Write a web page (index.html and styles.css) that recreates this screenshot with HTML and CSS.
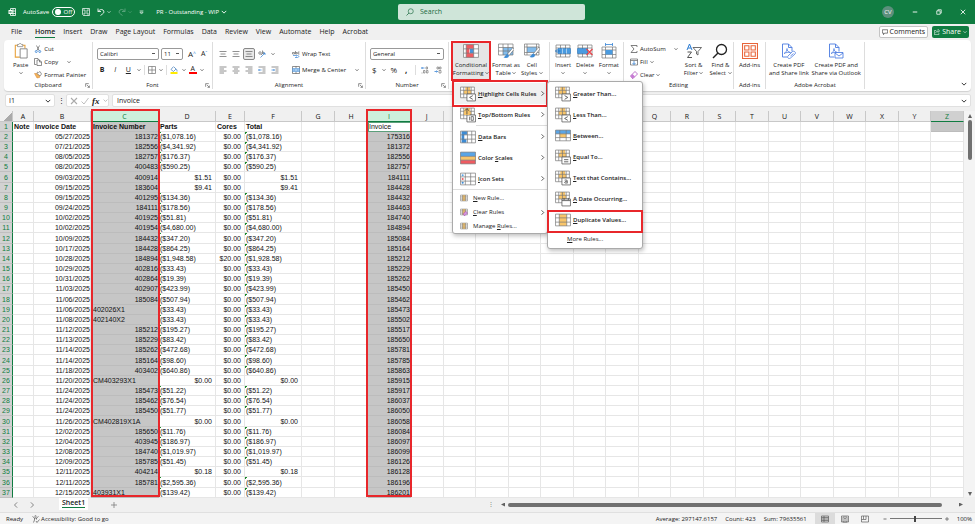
FILE: index.html
```html
<!DOCTYPE html>
<html lang="en">

<head>
    <meta charset="UTF-8">
    <meta name="viewport" content="width=device-width, initial-scale=1.0">
    <title>PR - Outstanding - WIP</title>
    <link rel="stylesheet" href="styles.css">
</head>

<body>
    <!-- icon sprite -->
    <svg class="sprite">
        <symbol id="chev" viewBox="0 0 8 8"><path d="M1 2.5l3 3 3-3" fill="none" stroke="currentColor" stroke-width="1.2"/></symbol>
        <symbol id="chev-right" viewBox="0 0 8 8"><path d="M2.5 .5L6 4 2.5 7.500" fill="none" stroke="currentColor" stroke-width="1.2"/></symbol>
        <symbol id="chev-left" viewBox="0 0 8 8"><path d="M5.500 .5L2 4l3.500 3.500" fill="none" stroke="currentColor" stroke-width="1.2"/></symbol>
        <symbol id="excel" viewBox="0 0 16 16"><path d="M5 1h10v14H5V1zM5 6h10M10 1v14M5 11h10" fill="none" stroke="#fff" stroke-width="1.6"/><path d="M1 4h8v8H1z" fill="#fff"/><path d="M3 6l4 4M7 6l-4 4" stroke="#107c41" stroke-width="1.5"/></symbol>
        <symbol id="save" viewBox="0 0 16 16"><path d="M1 1h14v14H3l-2-2zM4 1v5h8V1M4 15v-5h8v5" fill="none" stroke="#fff" stroke-width="1.4"/></symbol>
        <symbol id="undo" viewBox="0 0 16 16"><path d="M2 1v6h6M2 7c3-4 7-5 10-3 3 3 2 6-1 8l-4 3" fill="none" stroke="currentColor" stroke-width="1.7"/></symbol>
        <symbol id="redo" viewBox="0 0 16 16"><path d="M14 1v6H8M14 7C11 3 7 2 4 4c-3 3-2 6 1 8l4 3" fill="none" stroke="currentColor" stroke-width="1.7"/></symbol>
        <symbol id="more" viewBox="0 0 8 8"><path d="M1 1.500h6" stroke="currentColor"/><path d="M1.500 3.500h5L4 6.500z" fill="none" stroke="currentColor"/></symbol>
        <symbol id="search" viewBox="0 0 16 16"><circle cx="9.500" cy="6.500" r="5" fill="none" stroke="currentColor" stroke-width="1.300"/><path d="M6 10l-5 5" stroke="currentColor" stroke-width="1.500"/></symbol>
        <symbol id="minus" viewBox="0 0 8 8"><path d="M1 4h6" stroke="currentColor" stroke-width="1.2"/></symbol>
        <symbol id="plus" viewBox="0 0 8 8"><path d="M0 4h8M4 0v8" stroke="currentColor"/></symbol>
        <symbol id="restore" viewBox="0 0 8 8"><path d="M1 2.500h4.500V7H1zM2.500 2.500V1H7v4.500H5.500" fill="none" stroke="currentColor"/></symbol>
        <symbol id="close" viewBox="0 0 8 8"><path d="M1 1l6 6M7 1L1 7" stroke="currentColor" stroke-width="1.100"/></symbol>
        <symbol id="comment" viewBox="0 0 16 16"><path d="M1 2h14v9H7l-3 4v-4H1z" fill="none" stroke="currentColor" stroke-width="1.500"/></symbol>
        <symbol id="share" viewBox="0 0 16 16"><path d="M6 4H1v11h12v-4M4 11c1-4 4-5 7-5V9l4-4-4-4v3" fill="none" stroke="currentColor" stroke-width="1.500"/></symbol>
        <symbol id="paste" viewBox="0 0 32 36"><path d="M13 32H3V5h22v7" fill="#fff" stroke="#e8a33d" stroke-width="2.500"/><path d="M8 3h3c1-3 5-3 6 0h3v5H8z" fill="#fff" stroke="#777" stroke-width="1.500"/><path d="M14 13h16v21H14z" fill="#fff" stroke="#666" stroke-width="1.700"/></symbol>
        <symbol id="cut" viewBox="0 0 16 16"><path d="M5 1l5 10M11 1L6 11" stroke="#555" stroke-width="1.300"/><circle cx="4.500" cy="13" r="2" fill="none" stroke="#2b7cd3" stroke-width="1.500"/><circle cx="11.500" cy="13" r="2" fill="none" stroke="#2b7cd3" stroke-width="1.500"/></symbol>
        <symbol id="copy" viewBox="0 0 16 16"><path d="M5 13H1V1h7l2 3" fill="none" stroke="#555" stroke-width="1.300"/><path d="M6 4h5l4 4v7H6zM11 4v4h4" fill="#fff" stroke="#555" stroke-width="1.300"/></symbol>
        <symbol id="painter" viewBox="0 0 16 16"><path d="M1 5l5 9 5-1 1-4-5-4z" fill="#f2b35b" stroke="#d9822b"/><path d="M6 5l6 5 3-4-3-5-3 2-2-1z" fill="#fff" stroke="#666" stroke-width="1.300"/></symbol>
        <symbol id="borders" viewBox="0 0 16 16"><path d="M1 1h14v14H1zM1 8h14M8 1v14" fill="none" stroke="#666" stroke-width="1.300"/></symbol>
        <symbol id="bucket" viewBox="0 0 16 16"><path d="M7 1L2 7l5 4 5-5-4-4M12 6c2 1 2 3 2 5" fill="none" stroke="#2b6cb0" stroke-width="1.300"/><path d="M1 12h14v4H1z" fill="#ffeb00"/></symbol>
        <symbol id="al-h" viewBox="0 0 16 16"><path d="M1 2h14M4 6h8M1 10h14M4 14h8" stroke="#555" stroke-width="1.300"/></symbol>
        <symbol id="al-l" viewBox="0 0 16 16"><path d="M1 2h14M1 6h9M1 10h14M1 14h9" stroke="#555" stroke-width="1.300"/></symbol>
        <symbol id="al-r" viewBox="0 0 16 16"><path d="M1 2h14M6 6h9M1 10h14M6 14h9" stroke="#555" stroke-width="1.300"/></symbol>
        <symbol id="al-3" viewBox="0 0 16 16"><path d="M1 3h14M3 8h10M1 13h14" stroke="#555" stroke-width="1.300"/></symbol>
        <symbol id="indent-l" viewBox="0 0 16 16"><path d="M1 2h14M9 6h6M9 10h6M1 14h14" stroke="#555" stroke-width="1.300"/><path d="M7 8H1l2-2M1 8l2 2" fill="none" stroke="#2b7cd3" stroke-width="1.400"/></symbol>
        <symbol id="indent-r" viewBox="0 0 16 16"><path d="M1 2h14M9 6h6M9 10h6M1 14h14" stroke="#555" stroke-width="1.300"/><path d="M1 8h6L5 6M7 8l-2 2" fill="none" stroke="#2b7cd3" stroke-width="1.400"/></symbol>
        <symbol id="orient" viewBox="0 0 16 16"><circle cx="4" cy="6" r="2.500" fill="none" stroke="#555" stroke-width="1.300"/><path d="M6 10l3-3M9 1v6c3 1 4-3 1-3" fill="none" stroke="#555" stroke-width="1.300"/><path d="M5 15L14 6M10 6h4v4" fill="none" stroke="#2b7cd3" stroke-width="1.400"/></symbol>
        <symbol id="wrap" viewBox="0 0 16 16"><path d="M1 5h4v3H1zM7 2v6h3V5H7M15 4h-3v4h3" fill="none" stroke="#555" stroke-width="1.200"/><path d="M2 11h9c4 0 3 4 0 4H7l2-2M7 15l2 1" fill="none" stroke="#2b7cd3" stroke-width="1.300"/></symbol>
        <symbol id="merge" viewBox="0 0 16 16"><path d="M1 1h14v14H1zM8 1v4M8 11v4" fill="none" stroke="#555" stroke-width="1.300"/><path d="M1 5h14v6H1z" fill="#cfe6f8" stroke="#2b7cd3"/><path d="M3 8h10M5 6L3 8l2 2M11 6l2 2-2 2" fill="none" stroke="#2b7cd3"/></symbol>
        <symbol id="decimal" viewBox="0 0 16 16"><path d="M7 4H1l2-2M1 4l2 2" fill="none" stroke="#2b7cd3" stroke-width="1.500"/><path d="M10 2h3v4h-3zM5 9h3v5H5zM11 9h3v5h-3zM2 13v2" fill="none" stroke="#666" stroke-width="1.200"/></symbol>
        <symbol id="decimal-r" viewBox="0 0 16 16"><path d="M1 11h6L5 9M7 11l-2 2" fill="none" stroke="#2b7cd3" stroke-width="1.500"/><path d="M6 2h3v4H6zM11 2h3v4h-3zM10 9h4v5h-4z" fill="none" stroke="#666" stroke-width="1.200"/></symbol>
        <symbol id="cf" viewBox="0 0 30 26"><path d="M1 1h28v24H1z" fill="#fff"/><path d="M6 1h14v8H6zM6 9h6v8H6zM6 17h14v8H6z" fill="#ef5b61"/><path d="M13 9h7v8h-7z" fill="#4a94dc"/><path d="M1 1h28v24H1zM1 9h28M1 17h28M6 1v24M20 1v24" fill="none" stroke="#777" stroke-width="1.300"/></symbol>
        <symbol id="ftable" viewBox="0 0 32 32"><path d="M1 2h29v22H1z" fill="#fff"/><path d="M10 9h20v15H10z" fill="#82bcec"/><path d="M1 2h29v22H1zM1 9h29M1 16h29M10 2v22M20 2v22" fill="none" stroke="#777" stroke-width="1.400"/><path d="M30 9L19 22l3 3L32 13z" fill="#fff" stroke="#555"/><path d="M19 22c-4 1-4 5-8 7 5 2 11 1 11-4z" fill="#3d8bd4"/></symbol>
        <symbol id="cstyle" viewBox="0 0 32 32"><path d="M1 2h29v22H1z" fill="#fff"/><path d="M6 8h19v11H6z" fill="#82bcec"/><path d="M1 2h29v22H1zM1 8h29M1 19h29M6 2v22M25 2v22" fill="none" stroke="#777" stroke-width="1.400"/><path d="M30 8L19 21l3 3L32 12z" fill="#fff" stroke="#555"/><path d="M19 21c-4 1-4 5-8 7 5 2 11 1 11-4z" fill="#3d8bd4"/></symbol>
        <symbol id="insert" viewBox="0 0 32 28"><path d="M2 2h28v24H2zM2 8h28M2 20h28M11 2v24M21 2v24" fill="#fff" stroke="#777" stroke-width="1.400"/><path d="M6 9h25v10H6z" fill="#4a9be0" stroke="#1f6fb8"/><path d="M15 9v10M23 9v10" stroke="#fff"/><path d="M11 14H1M5 10l-4 4 4 4" fill="none" stroke="#1f6fb8" stroke-width="1.600"/></symbol>
        <symbol id="delete" viewBox="0 0 32 28"><path d="M2 2h28v24H2zM2 8h28M2 20h28M11 2v24M21 2v24" fill="#fff" stroke="#777" stroke-width="1.400"/><path d="M1 9h20v10H1z" fill="#4a9be0" stroke="#1f6fb8"/><path d="M19 10l12 12M31 10L19 22" stroke="#e8434a" stroke-width="2.400"/></symbol>
        <symbol id="format" viewBox="0 0 32 32"><path d="M2 8h28v22H2zM2 14h28M2 23h28M9 8v22M23 8v22" fill="#fff" stroke="#777" stroke-width="1.400"/><path d="M9 14h14v9H9z" fill="#4a9be0"/><path d="M9 3h14M9 0v6M23 0v6" stroke="#2b7cd3" stroke-width="1.500"/></symbol>
        <symbol id="sum" viewBox="0 0 16 16"><path d="M14 4V1H2l6 7-6 7h12v-3" fill="none" stroke="#555" stroke-width="1.500"/></symbol>
        <symbol id="fill" viewBox="0 0 16 16"><path d="M1 2h14v12H1zM1 5h14" fill="none" stroke="#555" stroke-width="1.300"/><path d="M8 6v7M5 10l3 3 3-3" fill="none" stroke="#2b7cd3" stroke-width="1.500"/></symbol>
        <symbol id="eraser" viewBox="0 0 16 16"><path d="M1 10l9-9 5 5-9 9H5z" fill="#fff" stroke="#a33bb5" stroke-width="1.400"/><path d="M1 10l4-4 5 5-4 4H5z" fill="#c77bd4"/></symbol>
        <symbol id="sort" viewBox="0 0 32 30"><path d="M2 13L7 1l5 12M4 9h6" fill="none" stroke="#2b7cd3" stroke-width="2"/><path d="M3 17h8L3 28h9" fill="none" stroke="#555" stroke-width="2"/><path d="M14 8h17l-7 8v7l-3-2v-5z" fill="#fff" stroke="#555" stroke-width="1.700"/></symbol>
        <symbol id="addins" viewBox="0 0 30 30"><path d="M1 1h28v28H1z" fill="#fff" stroke="#e8653a" stroke-width="2"/><path d="M5 5h8v8H5zM17 5h8v8h-8zM5 17h8v8H5zM17 17h8v8h-8z" fill="none" stroke="#e8653a" stroke-width="2"/></symbol>
        <symbol id="pdf" viewBox="0 0 30 32"><path d="M11 28H2V2h12l7 7v8M14 2v7h7" fill="none" stroke="#4a7be0" stroke-width="1.800"/><path d="M5 21c4-2 6-6 6-10 0 4 2 7 7 8-5-1-9 0-13 2z" fill="none" stroke="#4a7be0" stroke-width="1.500"/></symbol>
        <symbol id="pdf-link" viewBox="0 0 30 32"><use href="#pdf"/><path d="M13 26l9-9c3-2 8 2 5 5l-9 8c-3 3-8-1-5-4zM18 26l6-5" fill="#fff" stroke="#4a7be0" stroke-width="1.600"/></symbol>
        <symbol id="pdf-mail" viewBox="0 0 30 32"><use href="#pdf"/><path d="M13 19h16v11H13zM13 20l8 6 8-6" fill="#fff" stroke="#4a7be0" stroke-width="1.700"/></symbol>
        <symbol id="launch" viewBox="0 0 8 8"><path d="M1 6V1h5M3 3l4 4M7 4v3H4" fill="none" stroke="#555"/></symbol>
        <symbol id="check" viewBox="0 0 16 16"><path d="M1 9l5 5L15 2" fill="none" stroke="currentColor" stroke-width="1.500"/></symbol>
        <!-- menu icons -->
        <symbol id="m-base" viewBox="0 0 30 30"><path d="M1 2h26v20H1z" fill="#fff"/><path d="M7 8h14v7H7zM10 2h9v6h-9z" fill="#f8c56a"/><path d="M1 2h26v20H1zM1 8h26M1 15h26M7 2v20M14 2v20M21 2v20" fill="none" stroke="#777" stroke-width="1.300"/></symbol>
        <symbol id="m-badge" viewBox="0 0 30 30"><use href="#m-base"/><path d="M13 15h16v13H13z" fill="#fff" stroke="#555" stroke-width="1.400"/></symbol>
        <symbol id="m-gt" viewBox="0 0 30 30"><use href="#m-badge"/><path d="M18 18l6 3.500-6 3.500" fill="none" stroke="#444" stroke-width="1.500"/></symbol>
        <symbol id="m-lt" viewBox="0 0 30 30"><use href="#m-badge"/><path d="M24 18l-6 3.500 6 3.500" fill="none" stroke="#444" stroke-width="1.500"/></symbol>
        <symbol id="m-eq" viewBox="0 0 30 30"><use href="#m-badge"/><path d="M17 20h8M17 24h8" stroke="#444" stroke-width="1.500"/></symbol>
        <symbol id="m-txt" viewBox="0 0 30 30"><use href="#m-badge"/><path d="M18 19c6-1 5 1 5 6M23 21c-7 0-6 5 0 3" fill="none" stroke="#444" stroke-width="1.500"/></symbol>
        <symbol id="m-date" viewBox="0 0 30 30"><use href="#m-badge"/><path d="M13 18h16M17 13v4M25 13v4" stroke="#555" stroke-width="1.600"/></symbol>
        <symbol id="m-top" viewBox="0 0 30 30"><use href="#m-badge"/><path d="M8 3h10v12H8z" fill="#f8c56a"/><path d="M13 14V3M9 7l4-4 4 4" fill="none" stroke="#444" stroke-width="1.500"/><path d="M18 18v7M21 18h4v7h-4z" fill="none" stroke="#444" stroke-width="1.300"/></symbol>
        <symbol id="m-between" viewBox="0 0 30 30"><path d="M1 4h28v20H1z" fill="#fff"/><path d="M1 4h28v7H1z" fill="#5aa5e6"/><path d="M9 11h12v7H9z" fill="#f8c56a"/><path d="M1 4h28v20H1zM1 11h28M1 18h28M9 4v20M21 4v20" fill="none" stroke="#777" stroke-width="1.300"/></symbol>
        <symbol id="m-dup" viewBox="0 0 30 30"><path d="M1 4h28v22H1z" fill="#fff"/><path d="M8 4h14v22H8z" fill="#f8c56a"/><path d="M1 4h28v22H1zM1 11h28M1 19h28M8 4v22M22 4v22" fill="none" stroke="#777" stroke-width="1.300"/></symbol>
        <symbol id="m-bars" viewBox="0 0 30 30"><path d="M1 4h28v22H1z" fill="#fff"/><path d="M3 4h10v7H3zM3 11h5v8H3zM3 19h9v7H3z" fill="#3d8bd4"/><path d="M1 4h28v22H1zM1 11h28M1 19h28M14 4v22M22 4v22" fill="none" stroke="#777" stroke-width="1.300"/></symbol>
        <symbol id="m-scales" viewBox="0 0 30 30"><path d="M1 4h28v8H1z" fill="#5aa5e6"/><path d="M1 12h28v7H1z" fill="#f8c56a"/><path d="M1 19h28v7H1z" fill="#ef5b61"/><path d="M1 4h28v22H1zM1 12h28M1 19h28" fill="none" stroke="#777" stroke-width="1.300"/></symbol>
        <symbol id="m-icons" viewBox="0 0 30 30"><path d="M1 4h28v22H1zM1 11h28M1 19h28M10 4v22M20 4v22" fill="#fff" stroke="#777" stroke-width="1.300"/><circle cx="5" cy="8" r="2" fill="#5aa5e6"/><circle cx="5" cy="15" r="2" fill="#ef5b61"/><circle cx="5" cy="22" r="2" fill="#3d8bd4"/></symbol>
        <symbol id="m-new" viewBox="0 0 30 30"><path d="M2 4h26v22H2z" fill="#fff"/><path d="M9 4h12v22H9z" fill="#f8c56a"/><path d="M2 4h26v22H2zM2 11h26M2 19h26M9 4v22M21 4v22" fill="none" stroke="#777" stroke-width="2"/></symbol>
        <symbol id="m-clear" viewBox="0 0 30 30"><use href="#m-new"/><path d="M13 22l9-9 6 6-9 9h-4z" fill="#d79be0" stroke="#a33bb5" stroke-width="2"/></symbol>
        <symbol id="access" viewBox="0 0 16 16"><circle cx="7" cy="2.500" r="1.500" fill="none" stroke="#555"/><path d="M1 3l4 3v4l-2 5M13 3L9 6v3M5 6h4M8 12l2 3 5-6" fill="none" stroke="#555" stroke-width="1.400"/></symbol>
        <symbol id="v-normal" viewBox="0 0 16 14"><path d="M1 1h14v12H1zM1 4h14M1 7h14M1 10h14M6 1v12" fill="none" stroke="#555" stroke-width="1.300"/></symbol>
        <symbol id="v-page" viewBox="0 0 16 14"><path d="M1 1h14v12H1zM4 3h8v10H4zM6 6h4M6 9h4" fill="none" stroke="#555" stroke-width="1.300"/></symbol>
        <symbol id="v-break" viewBox="0 0 16 14"><path d="M1 1h14v12H1zM5 1v7h5V1M1 8h4" fill="none" stroke="#555" stroke-width="1.300"/></symbol>
    </svg>

    <header class="titlebar">
        <div class="title-left">
            <svg class="ic8"><use href="#excel"/></svg>
            <label class="autosave">AutoSave <span class="switch"><input type="checkbox">Off</span></label>
            <button aria-label="Save"><svg class="ic8"><use href="#save"/></svg></button>
            <button aria-label="Undo"><svg class="ic8"><use href="#undo"/></svg><svg class="ic4"><use href="#chev"/></svg></button>
            <button class="dim" aria-label="Redo"><svg class="ic8"><use href="#redo"/></svg><svg class="ic4"><use href="#chev"/></svg></button>
            <button class="qat-more" aria-label="Customize"><svg class="ic5"><use href="#more"/></svg></button>
            <button class="doc-name">PR - Outstanding - WIP <svg class="ic6"><use href="#chev"/></svg></button>
        </div>
        <div class="search">
            <svg class="ic8"><use href="#search"/></svg>
            <input type="text" placeholder="Search" aria-label="Search">
        </div>
        <div class="title-right">
            <span class="avatar">CV</span>
            <button aria-label="Minimize"><svg class="ic6"><use href="#minus"/></svg></button>
            <button aria-label="Restore"><svg class="ic6"><use href="#restore"/></svg></button>
            <button aria-label="Close"><svg class="ic6"><use href="#close"/></svg></button>
        </div>
    </header>

    <nav class="tabs">
        <button>File</button>
        <button class="active">Home</button>
        <button>Insert</button>
        <button>Draw</button>
        <button>Page Layout</button>
        <button>Formulas</button>
        <button>Data</button>
        <button>Review</button>
        <button>View</button>
        <button>Automate</button>
        <button>Help</button>
        <button>Acrobat</button>
        <div class="tabs-right">
            <button class="comments"><svg class="ic6"><use href="#comment"/></svg>Comments</button>
            <button class="share"><svg class="ic6"><use href="#share"/></svg>Share<svg class="ic4"><use href="#chev"/></svg></button>
        </div>
    </nav>

    <section class="ribbon">
        <div class="group g-clipboard">
            <div class="tools">
                <button class="big"><svg class="ic-paste"><use href="#paste"/></svg><span>Paste</span><svg class="ic4"><use href="#chev"/></svg></button>
                <div class="stack">
                    <button><svg class="ic8"><use href="#cut"/></svg>Cut</button>
                    <button><svg class="ic8"><use href="#copy"/></svg>Copy <svg class="ic4 far"><use href="#chev"/></svg></button>
                    <button><svg class="ic8"><use href="#painter"/></svg>Format Painter</button>
                </div>
            </div>
            <div class="group-label">Clipboard<svg class="launch"><use href="#launch"/></svg></div>
        </div>

        <div class="group g-font">
            <div class="tools rows">
                <div class="row">
                    <select class="font-name" aria-label="Font"><option>Calibri</option></select>
                    <select class="font-size" aria-label="Font size"><option>11</option></select>
                    <button class="grow">A<sup>^</sup></button>
                    <button class="shrink">A<sup>ˇ</sup></button>
                </div>
                <div class="row spread">
                    <button class="letter"><b>B</b></button>
                    <button class="letter"><i>I</i></button>
                    <button class="letter"><u>U</u></button>
                    <svg class="ic4"><use href="#chev"/></svg>
                    <span class="vline"></span>
                    <button aria-label="Borders"><svg class="ic8"><use href="#borders"/></svg></button>
                    <svg class="ic4"><use href="#chev"/></svg>
                    <span class="vline"></span>
                    <button aria-label="Fill colour"><svg class="ic8"><use href="#bucket"/></svg></button>
                    <svg class="ic4"><use href="#chev"/></svg>
                    <button class="font-color">A</button>
                    <svg class="ic4"><use href="#chev"/></svg>
                </div>
            </div>
            <div class="group-label">Font<svg class="launch"><use href="#launch"/></svg></div>
        </div>

        <div class="group g-align">
            <div class="tools">
                <div class="rows align-icons">
                    <div class="row">
                        <button aria-label="Top"><svg class="ic8"><use href="#al-3"/></svg></button>
                        <button aria-label="Middle"><svg class="ic8"><use href="#al-3"/></svg></button>
                        <button class="pressed" aria-label="Bottom"><svg class="ic8"><use href="#al-3"/></svg></button>
                        <button aria-label="Orientation"><svg class="ic8"><use href="#orient"/></svg></button>
                        <svg class="ic4"><use href="#chev"/></svg>
                    </div>
                    <div class="row">
                        <button aria-label="Left"><svg class="ic8"><use href="#al-l"/></svg></button>
                        <button aria-label="Centre"><svg class="ic8"><use href="#al-h"/></svg></button>
                        <button aria-label="Right"><svg class="ic8"><use href="#al-r"/></svg></button>
                        <button aria-label="Decrease indent"><svg class="ic8"><use href="#indent-l"/></svg></button>
                        <button aria-label="Increase indent"><svg class="ic8"><use href="#indent-r"/></svg></button>
                    </div>
                </div>
                <div class="rows wraps">
                    <div class="row"><button><svg class="ic8"><use href="#wrap"/></svg>Wrap Text</button></div>
                    <div class="row"><button><svg class="ic8"><use href="#merge"/></svg>Merge &amp; Center</button><svg class="ic4 far"><use href="#chev"/></svg></div>
                </div>
            </div>
            <div class="group-label">Alignment<svg class="launch"><use href="#launch"/></svg></div>
        </div>

        <div class="group g-number">
            <div class="tools rows">
                <div class="row"><select class="num-format" aria-label="Number format"><option>General</option></select></div>
                <div class="row spread">
                    <button class="sym">$</button>
                    <svg class="ic4"><use href="#chev"/></svg>
                    <button class="sym">%</button>
                    <button class="sym comma"><b>,</b></button>
                    <span class="vline"></span>
                    <button aria-label="Increase decimal"><svg class="ic8"><use href="#decimal"/></svg></button>
                    <button aria-label="Decrease decimal"><svg class="ic8"><use href="#decimal-r"/></svg></button>
                </div>
            </div>
            <div class="group-label">Number<svg class="launch"><use href="#launch"/></svg></div>
        </div>

        <div class="group g-styles">
            <div class="tools">
                <div class="cf">
                    <button class="big cf-btn marked"><svg class="ic16"><use href="#cf"/></svg><span>Conditional<br>Formatting <svg class="ic4"><use href="#chev"/></svg></span></button>
                    <div class="menu">
                        <div class="sub">
                            <button class="item hover marked"><svg class="ic16"><use href="#m-lt"/></svg><span><u>H</u>ighlight Cells Rules</span><svg class="ic5 end"><use href="#chev-right"/></svg></button>
                            <div class="menu submenu">
                                <button class="item"><svg class="ic16"><use href="#m-gt"/></svg><span><u>G</u>reater Than...</span></button>
                                <button class="item"><svg class="ic16"><use href="#m-lt"/></svg><span><u>L</u>ess Than...</span></button>
                                <button class="item"><svg class="ic16"><use href="#m-between"/></svg><span><u>B</u>etween...</span></button>
                                <button class="item"><svg class="ic16"><use href="#m-eq"/></svg><span><u>E</u>qual To...</span></button>
                                <button class="item"><svg class="ic16"><use href="#m-txt"/></svg><span><u>T</u>ext that Contains...</span></button>
                                <button class="item"><svg class="ic16"><use href="#m-date"/></svg><span><u>A</u> Date Occurring...</span></button>
                                <button class="item marked"><svg class="ic16"><use href="#m-dup"/></svg><span><u>D</u>uplicate Values...</span></button>
                                <button class="item small more"><span><u>M</u>ore Rules...</span></button>
                            </div>
                        </div>
                        <button class="item"><svg class="ic16"><use href="#m-top"/></svg><span><u>T</u>op/Bottom Rules</span><svg class="ic5 end"><use href="#chev-right"/></svg></button>
                        <hr class="inset">
                        <button class="item"><svg class="ic16"><use href="#m-bars"/></svg><span><u>D</u>ata Bars</span><svg class="ic5 end"><use href="#chev-right"/></svg></button>
                        <button class="item"><svg class="ic16"><use href="#m-scales"/></svg><span>Color <u>S</u>cales</span><svg class="ic5 end"><use href="#chev-right"/></svg></button>
                        <button class="item"><svg class="ic16"><use href="#m-icons"/></svg><span><u>I</u>con Sets</span><svg class="ic5 end"><use href="#chev-right"/></svg></button>
                        <hr>
                        <button class="item small"><svg class="ic8"><use href="#m-new"/></svg><span><u>N</u>ew Rule...</span></button>
                        <button class="item small"><svg class="ic8"><use href="#m-clear"/></svg><span><u>C</u>lear Rules</span><svg class="ic5 end"><use href="#chev-right"/></svg></button>
                        <button class="item small"><svg class="ic8"><use href="#m-new"/></svg><span>Manage <u>R</u>ules...</span></button>
                    </div>
                </div>
                <button class="big"><svg class="ic16"><use href="#ftable"/></svg><span>Format as<br>Table <svg class="ic4"><use href="#chev"/></svg></span></button>
                <button class="big"><svg class="ic16"><use href="#cstyle"/></svg><span>Cell<br>Styles <svg class="ic4"><use href="#chev"/></svg></span></button>
            </div>
        </div>

        <div class="group g-cells">
            <div class="tools">
                <button class="big"><svg class="ic16"><use href="#insert"/></svg><span>Insert</span><svg class="ic4"><use href="#chev"/></svg></button>
                <button class="big"><svg class="ic16"><use href="#delete"/></svg><span>Delete</span><svg class="ic4"><use href="#chev"/></svg></button>
                <button class="big"><svg class="ic16"><use href="#format"/></svg><span>Format</span><svg class="ic4"><use href="#chev"/></svg></button>
            </div>
        </div>

        <div class="group g-editing">
            <div class="tools">
                <div class="stack">
                    <button><svg class="ic8"><use href="#sum"/></svg>AutoSum <svg class="ic4 far"><use href="#chev"/></svg></button>
                    <button><svg class="ic8"><use href="#fill"/></svg>Fill <svg class="ic4"><use href="#chev"/></svg></button>
                    <button><svg class="ic8"><use href="#eraser"/></svg>Clear <svg class="ic4"><use href="#chev"/></svg></button>
                </div>
                <button class="big"><svg class="ic16"><use href="#sort"/></svg><span>Sort &amp;<br>Filter <svg class="ic4"><use href="#chev"/></svg></span></button>
                <button class="big"><svg class="ic16"><use href="#search"/></svg><span>Find &amp;<br>Select <svg class="ic4"><use href="#chev"/></svg></span></button>
            </div>
            <div class="group-label">Editing</div>
        </div>

        <div class="group g-addins">
            <div class="tools">
                <button class="big"><svg class="ic16"><use href="#addins"/></svg><span>Add-ins</span></button>
            </div>
            <div class="group-label">Add-ins</div>
        </div>

        <div class="group g-acrobat">
            <div class="tools">
                <button class="big"><svg class="ic16"><use href="#pdf-link"/></svg><span>Create PDF<br>and Share link</span></button>
                <button class="big"><svg class="ic16"><use href="#pdf-mail"/></svg><span>Create PDF and<br>Share via Outlook</span></button>
            </div>
            <div class="group-label">Adobe Acrobat</div>
        </div>
        <button class="collapse" aria-label="Collapse ribbon"><svg class="ic6"><use href="#chev"/></svg></button>
    </section>

    <div class="formula-bar">
        <div class="name-box"><input type="text" value="I1" aria-label="Name box"><svg class="ic6"><use href="#chev"/></svg></div>
        <span class="dots">⋮</span>
        <div class="fx">
            <svg class="ic8 off"><use href="#close"/></svg>
            <svg class="ic8 off"><use href="#check"/></svg>
            <i>fx</i>
            <svg class="ic5 off"><use href="#chev"/></svg>
        </div>
        <div class="formula"><input type="text" value="Invoice" aria-label="Formula"><svg class="ic6"><use href="#chev"/></svg></div>
    </div>

    <main class="sheet">
        <div class="grid">
            <table id="cells">
                <colgroup>
                    <col class="w-head"><col class="w-a"><col class="w-b"><col class="w-c"><col class="w-d"><col class="w-e"><col class="w-f"><col class="w-g"><col class="w-h"><col class="w-i">
                </colgroup>
                <thead></thead>
                <tbody></tbody>
            </table>
            <div class="box box-c"></div>
            <div class="box box-i"></div>
        </div>
        <div class="vscroll">
            <span class="up"></span>
            <span class="thumb"></span>
            <span class="down"></span>
        </div>
    </main>

    <div class="sheet-tabs">
        <button aria-label="Previous"><svg class="ic6"><use href="#chev-left"/></svg></button>
        <button aria-label="Next"><svg class="ic6"><use href="#chev-right"/></svg></button>
        <button class="sheet-tab"><span>Sheet1</span></button>
        <button class="add" aria-label="New sheet"><svg class="ic6"><use href="#plus"/></svg></button>
        <div class="hscroll">
            <span class="dots">⋮</span>
            <span class="left"></span>
            <span class="thumb"></span>
            <span class="right"></span>
        </div>
    </div>

    <footer class="status">
        <span>Ready</span>
        <span class="access"><svg class="ic8"><use href="#access"/></svg>Accessibility: Good to go</span>
        <div class="status-right">
            <span>Average: 297147.6157</span>
            <span>Count: 423</span>
            <span>Sum: 79635561</span>
            <div class="views">
                <button class="on" aria-label="Normal"><svg class="ic8"><use href="#v-normal"/></svg></button>
                <button aria-label="Page layout"><svg class="ic8"><use href="#v-page"/></svg></button>
                <button aria-label="Page break"><svg class="ic8"><use href="#v-break"/></svg></button>
            </div>
            <div class="zoom">
                <svg class="ic4"><use href="#minus"/></svg>
                <input type="range" min="0" max="100" value="48" aria-label="Zoom">
                <svg class="ic4"><use href="#plus"/></svg>
            </div>
            <span>100%</span>
        </div>
    </footer>

    <script src="script.js"></script>
</body>

</html>
```
FILE: styles.css
```css
* {
    box-sizing: border-box;
}

body {
    margin: 0;
    height: 100vh;
    display: flex;
    flex-direction: column;
    overflow: hidden;
    background: #f0f0f0;
    color: #222;
    font-family: "Open Sans", "Noto Sans", sans-serif;
    font-size: 6px;
    line-height: 8px;
}

button,
input,
select {
    font: inherit;
    color: inherit;
    background: none;
    border: 0;
    padding: 0;
    margin: 0;
}

button {
    display: flex;
    align-items: center;
    white-space: nowrap;
}

svg {
    flex: none;
}

.sprite {
    display: none;
}

.ic4 { width: 4px; height: 4px; }
.ic5 { width: 5px; height: 5px; }
.ic6 { width: 6px; height: 6px; }
.ic8 { width: 8px; height: 8px; }
.ic16 { width: 16px; height: 16px; }

/* title bar */
.titlebar {
    flex: none;
    height: 24px;
    padding-left: 8px;
    display: grid;
    grid-template-columns: 1fr 187px 1fr;
    align-items: center;
    background: #107c41;
    color: #fff;
}

.title-left {
    display: flex;
    align-items: center;
}

.title-left > * {
    margin-right: 7px;
}

.title-left button {
    gap: 2px;
}

.autosave {
    display: flex;
    align-items: center;
    gap: 3px;
}

.switch {
    width: 23px;
    height: 10px;
    padding: 0 2px;
    display: flex;
    align-items: center;
    gap: 3px;
    border: 1px solid #fff;
    border-radius: 5px;
}

.switch input {
    appearance: none;
    width: 6px;
    height: 6px;
    border-radius: 50%;
    background: #fff;
}

.title-left .dim {
    color: #62a983;
}

.title-left .qat-more {
    margin: 0 12px 0 0;
}

.search {
    height: 16px;
    padding: 0 8px;
    display: flex;
    align-items: center;
    gap: 6px;
    background: #cfe5d9;
    color: #1d6b41;
    border-radius: 2px;
}

.search input {
    flex: 1;
    font-size: 7px;
}

.search input::placeholder {
    color: #1d6b41;
    opacity: 1;
}

.title-right {
    display: flex;
    justify-content: flex-end;
    align-items: center;
    gap: 18px;
    padding-right: 9px;
}

.avatar {
    width: 12px;
    height: 12px;
    line-height: 12px;
    text-align: center;
    border-radius: 50%;
    background: #5c8f7c;
}

/* ribbon tabs */
.tabs {
    flex: none;
    height: 16px;
    padding: 0 6px 0 7px;
    display: flex;
    align-items: center;
    font-size: 7px;
}

.tabs > button {
    height: 12px;
    margin: 0 4px;
}

.tabs > button:first-child {
    margin-right: 9px;
}

.tabs .active {
    font-weight: 600;
    border-bottom: 1px solid #107c41;
}

.tabs-right {
    display: flex;
    gap: 4px;
    margin-left: auto;
}

.comments,
.share {
    height: 12px;
    padding: 0 2px;
    gap: 2px;
    border-radius: 2px;
}

.comments {
    background: #fff;
    border: 1px solid #c4c4c4;
}

.share {
    background: #107c41;
    color: #fff;
}

/* ribbon */
.ribbon {
    flex: none;
    height: 51px;
    margin: 0 4px;
    display: flex;
    position: relative;
    background: #fff;
    border-radius: 4px;
    box-shadow: 0 1px 1px #d0d0d0;
}

.group {
    flex: none;
    margin: 2px 0;
    display: flex;
    flex-direction: column;
    border-right: 1px solid #ddd;
}

.g-clipboard { width: 89px; }
.g-font { width: 120px; }
.g-align { width: 153px; }
.g-number { width: 83px; }
.g-styles { width: 101px; }
.g-cells { width: 74px; }
.g-editing { width: 110px; }
.g-addins { width: 32px; }
.g-acrobat { width: 99px; }

.tools {
    height: 39px;
    display: flex;
}

.group-label {
    position: relative;
    text-align: center;
}

.launch {
    position: absolute;
    right: 2px;
    top: 2px;
    width: 5px;
    height: 5px;
}

.big {
    height: 39px;
    padding-top: 1px;
    flex-direction: column;
    justify-content: flex-start;
    gap: 2px;
    text-align: center;
}

.ic-paste {
    width: 14px;
    height: 16px;
}

.stack {
    display: flex;
    flex-direction: column;
    justify-content: space-around;
}

.stack button {
    gap: 2px;
}

.far {
    margin-left: 7px;
}

.g-clipboard .tools {
    padding-left: 9px;
    gap: 6px;
}

.rows {
    flex-direction: column;
    justify-content: center;
    gap: 3px;
}

.row {
    height: 13px;
    display: flex;
    align-items: center;
    gap: 2px;
}

.g-font .rows,
.g-number .rows {
    padding: 0 4px;
}

.spread {
    justify-content: space-between;
    padding: 0 2px;
}

select {
    appearance: none;
    height: 12px;
    padding: 0 2px;
    border: 1px solid #999;
    border-radius: 2px;
    background: #fff linear-gradient(#555, #555) no-repeat right 3px center / 3px 1px;
}

.font-name { width: 62px; }
.font-size { width: 22px; }
.num-format { width: 75px; }

.grow,
.shrink {
    margin-left: 3px;
    font-size: 8px;
}

.shrink {
    font-size: 7px;
}

sup {
    color: #2b7cd3;
    font-size: 5px;
    line-height: 5px;
}

.spread button {
    font-size: 7px;
}

.spread .letter {
    width: 10px;
    justify-content: center;
}

.g-font .spread {
    padding: 0 4px 0 0;
}

.vline {
    width: 1px;
    height: 10px;
    background: #ddd;
}

.spread .font-color {
    width: 8px;
    height: 9px;
    justify-content: center;
    border-bottom: 2px solid #f00;
}

.g-align .tools {
    gap: 7px;
    padding-left: 6px;
}

.g-align .rows {
    display: flex;
}

.align-icons .row {
    gap: 5px;
}

.align-icons {
    width: 66px;
}

.align-icons .pressed {
    margin: 0 -2px;
    padding: 1px;
    border: 1px solid #888;
    border-radius: 2px;
    background: #e8e8e8;
}

.wraps .row button {
    gap: 2px;
}

.spread .sym {
    font-size: 8px;
}

.spread .comma {
    width: 8px;
    justify-content: center;
}

/* styles, cells, editing */
.g-styles .tools {
    gap: 1px;
    padding-left: 2px;
}

.cf {
    position: relative;
}

.cf-btn {
    width: 40px;
    background: #e6e6e6;
}

.marked {
    position: relative;
}

/* red callout frames */
.marked::after,
.box {
    content: '';
    position: absolute;
    inset: -1px 0 0;
    border: 2px solid #e8272b;
    pointer-events: none;
    z-index: 2;
}

.g-cells .tools {
    justify-content: space-between;
    padding: 0 4px 0 5px;
}

.g-editing .tools {
    padding: 0 6px;
    gap: 6px;
}

.g-editing .far {
    margin-left: 6px;
}

.g-addins .tools {
    justify-content: center;
}

.g-acrobat .tools {
    justify-content: space-between;
    padding: 0 3px;
}

.collapse {
    position: absolute;
    right: 4px;
    bottom: 4px;
}

/* conditional formatting menu */
.menu {
    position: absolute;
    top: 39px;
    left: 1px;
    width: 96px;
    padding: 1px 0 0;
    background: #fff;
    border: 1px solid #aaa;
    border-radius: 3px;
    box-shadow: 1px 2px 4px rgba(0, 0, 0, 0.25);
    z-index: 5;
}

.sub {
    position: relative;
}

.submenu {
    top: -2px;
    left: 94px;
}

.item {
    width: 100%;
    height: 21px;
    padding: 0 2px 0 7px;
    gap: 2px;
    font-weight: 600;
}

.item .end {
    margin-left: auto;
}

.item.hover {
    background: #f0f0f0;
}

.item.hover::after {
    inset: -3px -1px;
}

.submenu .marked::after {
    inset: 1px -1px -3px;
}

.small {
    height: 14px;
    font-weight: 400;
    gap: 5px;
}

.more {
    height: 18px;
    padding-left: 19px;
}

.menu hr {
    height: 1px;
    margin: 0 0 1px;
    border: 0;
    background: #ddd;
}

.menu .inset {
    margin: 0 0 0 23px;
}

/* formula bar */
.formula-bar {
    flex: none;
    height: 20px;
    padding: 3px 4px 4px 5px;
    display: flex;
    align-items: stretch;
    gap: 3px;
    font-size: 7px;
}

.name-box,
.fx,
.formula {
    display: flex;
    align-items: center;
    padding: 0 3px;
    background: #fff;
    border: 1px solid #e0e0e0;
    border-radius: 2px;
}

.name-box {
    width: 50px;
}

.dots {
    width: 5px;
    line-height: 13px;
    text-align: center;
}

.fx {
    width: 43px;
    gap: 3px;
}

.fx i {
    font-family: "Liberation Serif", serif;
    font-size: 9px;
    font-weight: bold;
}

.off {
    color: #aaa;
}

.formula {
    flex: 1;
    padding-left: 4px;
}

.formula input,
.name-box input {
    flex: 1;
    min-width: 0;
}

/* sheet */
.sheet {
    flex: 1;
    min-height: 0;
    display: flex;
}

.grid {
    flex: 1;
    position: relative;
}

table {
    width: 100%;
    table-layout: fixed;
    border-spacing: 0;
    background: #fff;
    color: #111;
    font-family: "Liberation Sans", Arial, sans-serif;
    font-size: 7px;
    line-height: 9px;
}

.w-head { width: 13px; }
.w-a { width: 21px; }
.w-b { width: 57px; }
.w-c { width: 68px; }
.w-d { width: 57px; }
.w-e { width: 29px; }
.w-f { width: 57px; }
.w-g { width: 33px; }
.w-h { width: 33px; }
.w-i { width: 43px; }

th,
td {
    height: 10px;
    padding: 0 1px;
    border-right: 1px solid #e6e6e6;
    border-bottom: 1px solid #e6e6e6;
    white-space: nowrap;
    text-align: left;
}

tbody tr:nth-child(6n) td,
tbody tr:nth-child(6n) th {
    height: 11px;
}

thead th {
    height: 11px;
    background: #f0f0f0;
    border-color: #c8c8c8;
    font-family: "Open Sans", sans-serif;
    font-weight: 400;
    text-align: center;
}

thead .sel {
    background: #cdf0dc;
    color: #107c41;
    border-bottom-color: #107c41;
}

thead .part {
    background: #d0d0d0;
    color: #107c41;
    border-bottom-color: #107c41;
}

thead .corner {
    background: linear-gradient(135deg, #f0f0f0 60%, #aaa 60%);
}

tbody th {
    padding: 0;
    background: #d2d2d2;
    color: #107c41;
    border-right: 1px solid #107c41;
    border-bottom-color: #c0c0c0;
    font-weight: 400;
    text-align: center;
}

.title {
    font-weight: 700;
}

.gray {
    padding: 0 1px 0 2px;
    background: #c6c6c6;
    border-color: #bcbcbc;
}

.num {
    text-align: right;
    padding-right: 0;
}

.money {
    text-align: right;
    padding-right: 3px;
}

/* green corner: number stored as text */
.flag {
    background: linear-gradient(135deg, #1a8a2b 2px, transparent 2px) no-repeat;
}

.cursor {
    outline: 1px solid #5c9f7b;
    outline-offset: -1px;
}

.box-c {
    inset: -2px auto 0 91px;
    width: 69px;
}

.box-i {
    inset: -2px auto 0 366px;
    width: 46px;
}

.vscroll {
    width: 11px;
    padding: 3px 0 1px 4px;
    display: flex;
    flex-direction: column;
    background: #f4f4f4;
}

.vscroll .thumb {
    width: 4px;
    height: 40px;
    margin: 2px 0 auto;
    border-radius: 2px;
    background: #707070;
}

.up,
.down,
.left,
.right {
    width: 4px;
    height: 4px;
    background: #606060;
}

.up { clip-path: polygon(50% 0, 100% 100%, 0 100%); }
.down { clip-path: polygon(0 0, 100% 0, 50% 100%); }
.left { clip-path: polygon(0 50%, 100% 0, 100% 100%); }
.right { clip-path: polygon(0 0, 100% 50%, 0 100%); }

/* sheet tabs */
.sheet-tabs {
    flex: none;
    height: 15px;
    padding: 0 12px 0 13px;
    display: flex;
    align-items: center;
    gap: 10px;
    color: #777;
}

.sheet-tab {
    align-self: flex-start;
    height: 13px;
    margin-left: 14px;
    padding: 0 3px;
    background: #fff;
    color: #222;
    font-size: 7px;
    font-weight: 600;
}

.sheet-tab span {
    border-bottom: 1px solid #107c41;
}

.add {
    margin-left: 13px;
}

.hscroll {
    width: 50%;
    margin-left: auto;
    display: flex;
    align-items: center;
    gap: 3px;
}

.hscroll .left {
    margin-left: 5px;
}

.hscroll .thumb {
    flex: 1;
    height: 4px;
    margin-right: 14px;
    border-radius: 2px;
    background: #707070;
}

/* status bar */
.status {
    flex: none;
    height: 12px;
    padding: 0 3px 0 6px;
    display: flex;
    align-items: center;
    gap: 9px;
    background: #f4f4f4;
    border-top: 1px solid #e0e0e0;
}

.access {
    display: flex;
    gap: 1px;
}

.status-right {
    margin-left: auto;
    display: flex;
    align-items: center;
    gap: 8px;
}

.views {
    display: flex;
}

.views button {
    width: 20px;
    height: 11px;
    justify-content: center;
}

.views .on {
    background: #dcdcdc;
}

.zoom {
    display: flex;
    align-items: center;
    gap: 3px;
}

.zoom input {
    appearance: none;
    width: 52px;
    height: 1px;
    background: #777;
}

.zoom input::-webkit-slider-thumb {
    appearance: none;
    width: 2px;
    height: 6px;
    background: #444;
}
```
FILE: script.js
```js
// date, invoice number, parts, cores (default $0.00), total (default = parts)
var rows = [
    ['05/27/2025', '181372', '($1,078.16)'],
    ['07/21/2025', '182556', '($4,341.92)'],
    ['08/05/2025', '182757', '($176.37)'],
    ['08/20/2025', '400483', '($590.25)'],
    ['09/03/2025', '400914', '$1.51'],
    ['09/15/2025', '183604', '$9.41'],
    ['09/15/2025', '401295', '($134.36)'],
    ['09/24/2025', '184111', '($178.56)'],
    ['10/02/2025', '401925', '($51.81)'],
    ['10/02/2025', '401954', '($4,680.00)'],
    ['10/09/2025', '184432', '($347.20)'],
    ['10/17/2025', '184428', '($864.25)'],
    ['10/28/2025', '184894', '($1,948.58)', '$20.00', '($1,928.58)'],
    ['10/29/2025', '402816', '($33.43)'],
    ['10/31/2025', '402864', '($19.39)'],
    ['11/03/2025', '402907', '($423.99)'],
    ['11/06/2025', '185084', '($507.94)'],
    ['11/06/2025', '402026X1', '($33.43)'],
    ['11/08/2025', '402140X2', '($33.43)'],
    ['11/12/2025', '185212', '($195.27)'],
    ['11/13/2025', '185229', '($83.42)'],
    ['11/14/2025', '185262', '($472.68)'],
    ['11/14/2025', '185164', '($98.60)'],
    ['11/18/2025', '403402', '($640.86)'],
    ['11/20/2025', 'CM403293X1', '$0.00'],
    ['11/24/2025', '185473', '($51.22)'],
    ['11/24/2025', '185462', '($76.54)'],
    ['11/24/2025', '185450', '($51.77)'],
    ['11/26/2025', 'CM402819X1A', '$0.00'],
    ['12/02/2025', '185650', '($11.76)'],
    ['12/04/2025', '403945', '($186.97)'],
    ['12/08/2025', '184740', '($1,019.97)'],
    ['12/09/2025', '185785', '($51.45)'],
    ['12/11/2025', '404214', '$0.18'],
    ['12/11/2025', '185781', '($2,595.36)'],
    ['12/15/2025', '403931X1', '($139.42)']
];

var invoices = [175316, 181372, 182556, 182757, 184111, 184428, 184432, 184463, 184740,
    184894, 185084, 185164, 185212, 185229, 185262, 185450, 185462, 185473, 185502,
    185517, 185650, 185781, 185785, 185863, 185915, 185917, 186037, 186050, 186058,
    186084, 186097, 186099, 186126, 186128, 186196, 186201];

var letters = 'ABCDEFGHIJKLMNOPQRSTUVWXYZ'.split('');

function cell(text, cls) {
    return '<td class="' + (cls || '') + '">' + (text || '') + '</td>';
}

function money(text) {
    return cell(text, text[0] === '(' ? 'flag' : 'money');
}

function blanks(n) {
    return new Array(n + 1).join('<td></td>');
}

document.querySelector('#cells thead').innerHTML = '<tr><th class="corner"></th>' +
    letters.map(function (l) {
        var cls = l === 'C' || l === 'I' ? 'sel' : l === 'Z' ? 'part' : '';
        return '<th class="' + cls + '">' + l + '</th>';
    }).join('') + '</tr>';

var html = '<tr><th>1</th>' + cell('Note', 'title') + cell('Invoice Date', 'title') +
    cell('Invoice Number', 'title gray') + cell('Parts', 'title') + cell('Cores', 'title') +
    cell('Total', 'title') + blanks(2) + cell('Invoice', 'cursor') + blanks(16) + cell('', 'gray') + '</tr>';

rows.forEach(function (r, i) {
    html += '<tr><th>' + (i + 2) + '</th>' + blanks(1) + cell(r[0], 'num') +
        cell(r[1], /X/.test(r[1]) ? 'gray' : 'gray num') + money(r[2]) +
        cell(r[3] || '$0.00', 'money') + money(r[4] || r[2]) + blanks(2) +
        cell(invoices[i], 'gray num') + blanks(17) + '</tr>';
});

document.querySelector('#cells tbody').innerHTML = html;
```
